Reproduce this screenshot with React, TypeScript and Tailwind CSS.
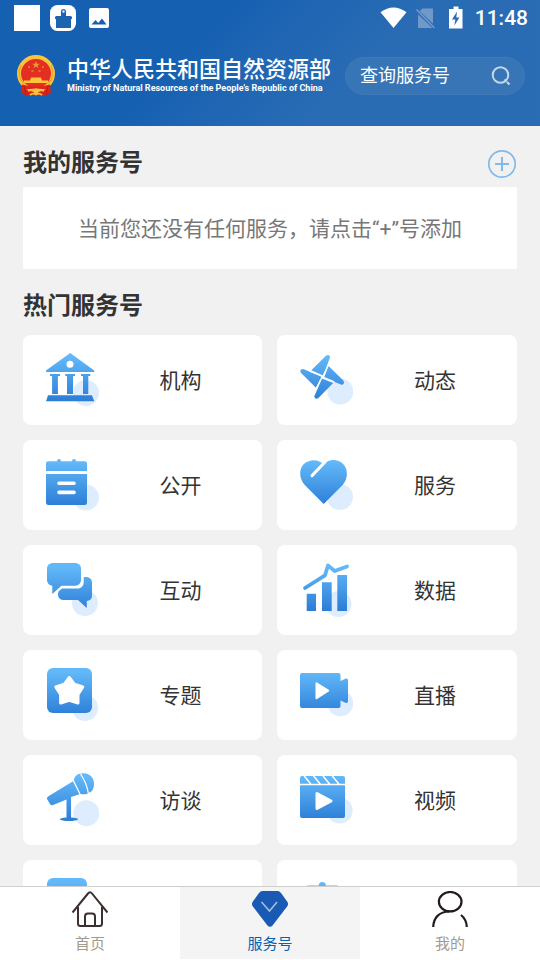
import type { ReactNode } from "react";

const BLUE = "url(#tile-blue)";

function TileIcon({ cx, cy, children }: { cx: number; cy: number; children: ReactNode }) {
  return (
    <svg viewBox="0 0 54 54" className="h-[54px] w-[54px] shrink-0" aria-hidden="true">
      <circle cx={cx} cy={cy} r="13" fill="#deedfd" />
      {children}
    </svg>
  );
}

const services: { name?: string; icon: ReactNode }[] = [
  {
    name: "机构",
    icon: (
      <TileIcon cx={41} cy={40}>
        <path
          fill={BLUE}
          fillRule="evenodd"
          d="M25.2 0 49.2 17.6V19H1V17.6ZM25 7.8a3.5 3.5 0 1 0 0 7 3.5 3.5 0 0 0 0-7ZM5 21H15V23H12.9V41H7.1V23H5ZM20.3 21H30V23H28V41H22V23H20.3ZM36 21H45.3V23H43.3V41H38V23H36ZM3 42.3H47L49.2 48.3H1Z"
        />
      </TileIcon>
    ),
  },
  {
    name: "动态",
    icon: (
      <TileIcon cx={41.3} cy={38.5}>
        <path
          fill={BLUE}
          d="M12.3 17.3 27.2 2.6Q30.8 1 31 4.4L24.2 22.6ZM29.6 13 44.6 27.8Q46 31.5 42.6 31.8L25 24.8ZM34.2 30 19.4 45Q16.4 47 15.2 43.4L23 25.6ZM17 34.8 1.6 19.6Q.4 16 4.2 16L22.6 23.6Z"
        />
        <path d="M10 18 35.5 28.700M29.500 12 17 35.500" stroke="#fff" strokeWidth="1" />
      </TileIcon>
    ),
  },
  {
    name: "公开",
    icon: (
      <TileIcon cx={41} cy={39.6}>
        <path
          fill={BLUE}
          d="M3.5 3.3H12V3a2 2 0 0 1 4 0v.3H27V3a2 2 0 0 1 4 0v.3h8.5A2.5 2.5 0 0 1 42 6v7H1V6a2.5 2.5 0 0 1 2.5-2.7ZM1 16H42V44.5A2.5 2.5 0 0 1 39.5 47h-36A2.5 2.5 0 0 1 1 44.5Z"
        />
        <path d="M14 25.3H29M14 34.4H29" stroke="#fff" strokeWidth="3.6" strokeLinecap="round" />
      </TileIcon>
    ),
  },
  {
    name: "服务",
    icon: (
      <TileIcon cx={41} cy={39}>
        <path
          fill={BLUE}
          d="M24.7 46 6 27.2C-1 20 0 9 6.4 4.8 12 1 19 1.200 24.700 6 30.200 1 37.500 1 42.500 4.600 49 9.200 50 20 43.400 27.200Z"
        />
        <path d="M13 17.600 26 4" stroke="#fff" strokeWidth="3" strokeLinecap="round" />
      </TileIcon>
    ),
  },
  {
    name: "互动",
    icon: (
      <TileIcon cx={40} cy={40}>
        <path
          fill={BLUE}
          d="M40 14h1.500A5.500 5.500 0 0 1 47 19.500V33a5 5 0 0 1-5.200 5V45L33 37H18.500A5.500 5.500 0 0 1 13 31.500 5 5 0 0 1 14 28l3-2.500H32a6 6 0 0 0 6.700-6V14Z"
        />
        <path
          fill={BLUE}
          d="M7.500 0h23A5.500 5.500 0 0 1 36 5.500v11.700a5.500 5.500 0 0 1-5.500 5.500H16.500L7.300 31V22.700A5.500 5.500 0 0 1 2 17.200V5.500A5.500 5.500 0 0 1 7.500 0Z"
        />
      </TileIcon>
    ),
  },
  {
    name: "数据",
    icon: (
      <TileIcon cx={39.500} cy={41}>
        <path fill={BLUE} d="M7.700 30.700H17V48H7.700ZM23 19.300H32.700V48H23ZM38.300 12H48V48H38.300Z" />
        <path
          d="M6 25 26 12.300 29 2.500 35.700 8 48 3.500"
          fill="none"
          stroke={BLUE}
          strokeWidth="3.800"
          strokeLinecap="round"
          strokeLinejoin="round"
        />
      </TileIcon>
    ),
  },
  {
    name: "专题",
    icon: (
      <TileIcon cx={40} cy={40}>
        <rect x="2" width="45" height="45" rx="6" fill={BLUE} />
        <path
          d="M24.300 9.500 29.500 16.300 37.800 19 33 26.500 33 35 24.300 32.200 15.600 35 15.600 26.500 10.800 19 19.100 16.300Z"
          fill="#fff"
          stroke="#fff"
          strokeWidth="3"
          strokeLinejoin="round"
        />
      </TileIcon>
    ),
  },
  {
    name: "直播",
    icon: (
      <TileIcon cx={41.300} cy={35.300}>
        <path
          fill={BLUE}
          d="M3 5H39.500a2 2 0 0 1 2 2v6l5.500-2.500Q49 10 49 12.500V33q0 2.500-2 2L41.500 32.500V38a2 2 0 0 1-2 2H3a2 2 0 0 1-2-2V7a2 2 0 0 1 2-2Z"
        />
        <path d="M17.500 15.300V30.200L29.200 22.700Z" fill="#fff" stroke="#fff" strokeWidth="2" strokeLinejoin="round" />
      </TileIcon>
    ),
  },
  {
    name: "访谈",
    icon: (
      <TileIcon cx={41.300} cy={40.300}>
        <path
          fill={BLUE}
          d="M3 23.500 28 8.200 34.500 21.200 26 24V44.600Q33 45 33 46.300C32 48.700 16 48.700 15 46.300Q15 45 21.500 44.600V26.500L8 32Q6 33 5 31L2 26Q1.600 24.500 3 23.500Z"
        />
        <path
          fill={BLUE}
          d="M29 8C29 4 31.500 1.500 35 .8 42-1.500 49 3 49 10.500 49 15 47.500 18.500 44.500 19.500 41.500 21.500 39 21.500 35.500 21Z"
        />
        <path d="M35.500 1C39 6 42 12 43.300 20" fill="none" stroke="#fff" strokeWidth="1.300" />
        <path d="M28.500 7.500 35.500 22" stroke="#fff" strokeWidth=".8" />
      </TileIcon>
    ),
  },
  {
    name: "视频",
    icon: (
      <TileIcon cx={40.700} cy={37.500}>
        <rect x="1" y="3" width="45" height="42" rx="2" fill={BLUE} />
        <path
          d="M1 11.500H46M5.200 3 11.800 11M14.600 3 21.200 11M24 3 30.600 11M33.300 3 39.900 11"
          stroke="#fff"
          strokeWidth="1.500"
        />
        <path d="M18 20.500V35.500L32 28Z" fill="#fff" stroke="#fff" strokeWidth="3" strokeLinejoin="round" />
      </TileIcon>
    ),
  },
  {
    icon: (
      <TileIcon cx={41} cy={40}>
        <rect x="2" width="40" height="46" rx="6" fill={BLUE} />
      </TileIcon>
    ),
  },
  {
    icon: (
      <TileIcon cx={41} cy={40}>
        <circle cx="23.300" cy="7.500" r="3.500" fill={BLUE} />
        <rect x="7" y="7.500" width="33" height="38" rx="2" fill={BLUE} />
      </TileIcon>
    ),
  },
];

function Emblem() {
  return (
    <svg viewBox="0 0 38 42" className="h-[42px] w-[38px] shrink-0" aria-hidden="true">
      <path d="M5 27H33L34 38.500 26 41 19 39 12 41 4 38.500Z" fill="#d9221c" />
      <ellipse cx="19" cy="18.500" rx="17" ry="16.500" fill="#e52e22" stroke="#f9c43a" strokeWidth="4" />
      <path d="M4 10Q-1 21 7 29M34 10Q39 21 31 29" fill="none" stroke="#e8992b" strokeWidth="1" />
      <path d="m19 6 1 2.700h2.800l-2.200 1.700.8 2.700-2.400-1.600-2.400 1.600.8-2.700-2.200-1.700H18Z" fill="#e89a30" />
      <path d="M11 11h2v2h-2ZM25 11h2v2h-2ZM14.500 15h2v2h-2ZM21.500 15h2v2h-2Z" fill="#d9752b" />
      <path d="M14 22.500h10l1 3H31l.500 2.500H6.500l.500-2.500h6Z" fill="#fbc43b" />
      <path d="M5 29.500Q19 33.500 33 29.500L33 35Q19 32 5 35Z" fill="#de241d" />
      <path
        d="M11 36Q15 34 19 37 23 34 27 36M13 40Q16 37.500 19 39.500 22 37.500 25 40"
        fill="none"
        stroke="#f9c43a"
        strokeWidth="1.800"
      />
      <circle cx="19" cy="36" r="2.500" fill="#fbc43b" />
      <path d="M7 31 9 40M31 31 29 40" stroke="#b81917" strokeWidth="1" />
    </svg>
  );
}

function StatusBar() {
  return (
    <div className="flex h-9 items-center justify-between pr-3 pl-3.5 text-white">
      <div className="flex items-center gap-2.5">
        <span className="h-[26px] w-[26px] bg-white" />
        <svg viewBox="0 0 26 26" className="h-[26px] w-[26px]" aria-hidden="true">
          <rect width="26" height="26" rx="7.500" fill="#fff" />
          <path
            fill="#1c63b1"
            fillRule="evenodd"
            d="M13.500 4a2.500 2.500 0 0 1 2.500 2.500V11h4.500Q22 11 22 12.500V14h-1v9H6v-9H5v-1.500Q5 11 6.500 11H11V6.500A2.500 2.500 0 0 1 13.500 4Zm0 1.300a1.200 1.200 0 1 0 0 2.400 1.200 1.200 0 0 0 0-2.400Z"
          />
        </svg>
        <svg viewBox="0 0 26 26" className="h-[26px] w-[26px]" aria-hidden="true">
          <path
            fill="#fff"
            fillRule="evenodd"
            d="M5 3H21a2 2 0 0 1 2 2V21a2 2 0 0 1-2 2H5a2 2 0 0 1-2-2V5a2 2 0 0 1 2-2ZM5.500 19.500H20.500L16 13.500 12.300 18 9.500 15Z"
          />
        </svg>
      </div>
      <div className="flex items-center">
        <svg viewBox="0 0 86 24" className="mr-2.5 h-6 w-[86px]" aria-hidden="true">
          <path d="M1.500 6.200Q14.500-3.200 27.500 6.200L14.500 22Z" fill="#fff" />
          <path d="M43.500 2.500H54V22H39V6.500Z" fill="#7099c9" />
          <path d="M36.500 3.500 56.500 22.500" stroke="#296cb4" strokeWidth="3.500" />
          <path d="M37.500 3.500 55.500 22" stroke="#7099c9" strokeWidth="1.700" />
          <path
            fill="#fff"
            fillRule="evenodd"
            d="M74.500 .5h5V3h4V22.500H70V3H74.500ZM78 5.500 73 13.500H76.300L75.300 19.500 80.500 11.500H77.300Z"
          />
        </svg>
        <time className="font-['Roboto',sans-serif] text-[21px] leading-6 font-medium">11:48</time>
      </div>
    </div>
  );
}

function Header() {
  return (
    <header className="h-[126px] shrink-0 bg-linear-135 from-[#1660b2] from-35% to-[#296cb4] to-65%">
      <StatusBar />
      <div className="flex h-20 items-center pr-[15px] pl-[17px]">
        <Emblem />
        <div className="ml-3 flex-1 whitespace-nowrap text-white">
          <h1 className="text-[22px] leading-6 font-medium">中华人民共和国自然资源部</h1>
          <p className="font-['Roboto',sans-serif] text-[9px] leading-3 font-bold">
            Ministry of Natural Resources of the People's Republic of China
          </p>
        </div>
        <form
          className="flex h-[38px] w-[180px] items-center rounded-full border border-[#4079b9] bg-[#3775b7] pr-[13px] pl-3.5"
          onSubmit={(event) => event.preventDefault()}
        >
          <input
            type="search"
            aria-label="查询服务号"
            placeholder="查询服务号"
            className="w-0 min-w-0 flex-1 bg-transparent text-lg leading-6 text-white outline-none placeholder:text-white"
          />
          <button type="submit" aria-label="查询">
            <svg viewBox="0 0 20 20" className="h-5 w-5" fill="none" stroke="#c4d7ea" aria-hidden="true">
              <circle cx="9.500" cy="9" r="7.800" strokeWidth="2" />
              <path d="M13.500 13.500 15.500 15.500M16 16 18.500 18.500" strokeWidth="2.200" />
            </svg>
          </button>
        </form>
      </div>
    </header>
  );
}

function BottomNav() {
  return (
    <nav className="grid h-[74px] shrink-0 grid-cols-3 border-t border-[#cfcfcf] bg-white pb-px text-[15px] leading-[22px] text-[#a19a8d]">
      <a href="#home" className="flex flex-col items-center gap-1.5 pt-1">
        <svg viewBox="0 0 36 36" className="h-9 w-9" fill="none" stroke="#3a302e" strokeWidth="2" aria-hidden="true">
          <path d="M.5 21.500 16 2.500Q18 0 20 2.500L35.500 21.500M6 16V32.500Q6 35 8.500 35H27.500Q30 35 30 32.500V16" />
          <path d="M13 35V25.500Q13 22.500 16 22.500H20Q23 22.500 23 25.500V35" />
        </svg>
        首页
      </a>
      <a href="#services" aria-current="page" className="flex flex-col items-center gap-1.5 bg-[#f4f4f4] pt-1 text-[#0064b4]">
        <svg viewBox="0 0 36 36" className="h-9 w-9" aria-hidden="true">
          <path
            d="M10.500 0H25.500Q27.500 0 29 2L35.500 11Q36.500 13 35.500 15L20.500 34.500Q18 37 15.500 34.500L.5 15Q-.5 13 .5 11L7 2Q8.500 0 10.500 0Z"
            fill="#1a5ab5"
          />
          <path d="M9.500 11 17.500 20 25 11" fill="none" stroke="#a6c0e2" strokeWidth="1.500" />
        </svg>
        服务号
      </a>
      <a href="#me" className="flex flex-col items-center gap-1.5 pt-1">
        <svg viewBox="0 0 36 36" className="h-9 w-9" fill="none" stroke="#231a1a" strokeWidth="2.200" aria-hidden="true">
          <ellipse cx="18.200" cy="10.700" rx="11.300" ry="9.700" />
          <path d="M1.200 36C1.500 27 7 20.500 17.500 20.500M29 24Q34.500 28.500 34.800 36" />
        </svg>
        我的
      </a>
    </nav>
  );
}

export default function App() {
  return (
    <div
      lang="zh-CN"
      className="flex h-screen flex-col overflow-hidden bg-[#f1f1f1] font-['Roboto','Noto_Sans_CJK_SC',sans-serif] text-[#333]"
    >
      <svg width="0" height="0" className="absolute" aria-hidden="true">
        <linearGradient id="tile-blue" gradientUnits="userSpaceOnUse" x1="0" y1="4" x2="0" y2="48">
          <stop offset="0" stopColor="#62b8f8" />
          <stop offset="1" stopColor="#2b7dd6" />
        </linearGradient>
      </svg>
      <Header />
      <main className="min-h-0 flex-1 overflow-y-auto px-[23px] [scrollbar-width:none]">
        <section>
          <div className="flex h-[61px] items-center justify-between pt-3">
            <h2 className="text-2xl leading-8 font-bold">我的服务号</h2>
            <button type="button" aria-label="添加服务号" className="pt-0.5">
              <svg viewBox="0 0 30 30" className="h-[30px] w-[30px]" fill="none" stroke="#83b9ea" aria-hidden="true">
                <circle cx="15" cy="15" r="13.200" strokeWidth="1.700" />
                <path d="M15 8V22M8 15H22" strokeWidth="2" />
              </svg>
            </button>
          </div>
          <p className="bg-white pt-[26px] pb-6 text-center text-[21px] leading-8 text-[#777]">
            当前您还没有任何服务，请点击“+”号添加
          </p>
        </section>
        <section>
          <h2 className="pt-[21px] pb-[13px] text-2xl leading-8 font-bold">热门服务号</h2>
          <ul className="grid grid-cols-[239fr_240fr] gap-[15px] pb-[15px]">
            {services.map((service, index) => (
              <li key={index}>
                <a href="#service" className="flex h-[90px] items-center rounded-lg bg-white pl-[22px]">
                  {service.icon}
                  <span className="flex-1 pt-0.5 text-center text-[21px] leading-8">{service.name}</span>
                </a>
              </li>
            ))}
          </ul>
        </section>
      </main>
      <BottomNav />
    </div>
  );
}
